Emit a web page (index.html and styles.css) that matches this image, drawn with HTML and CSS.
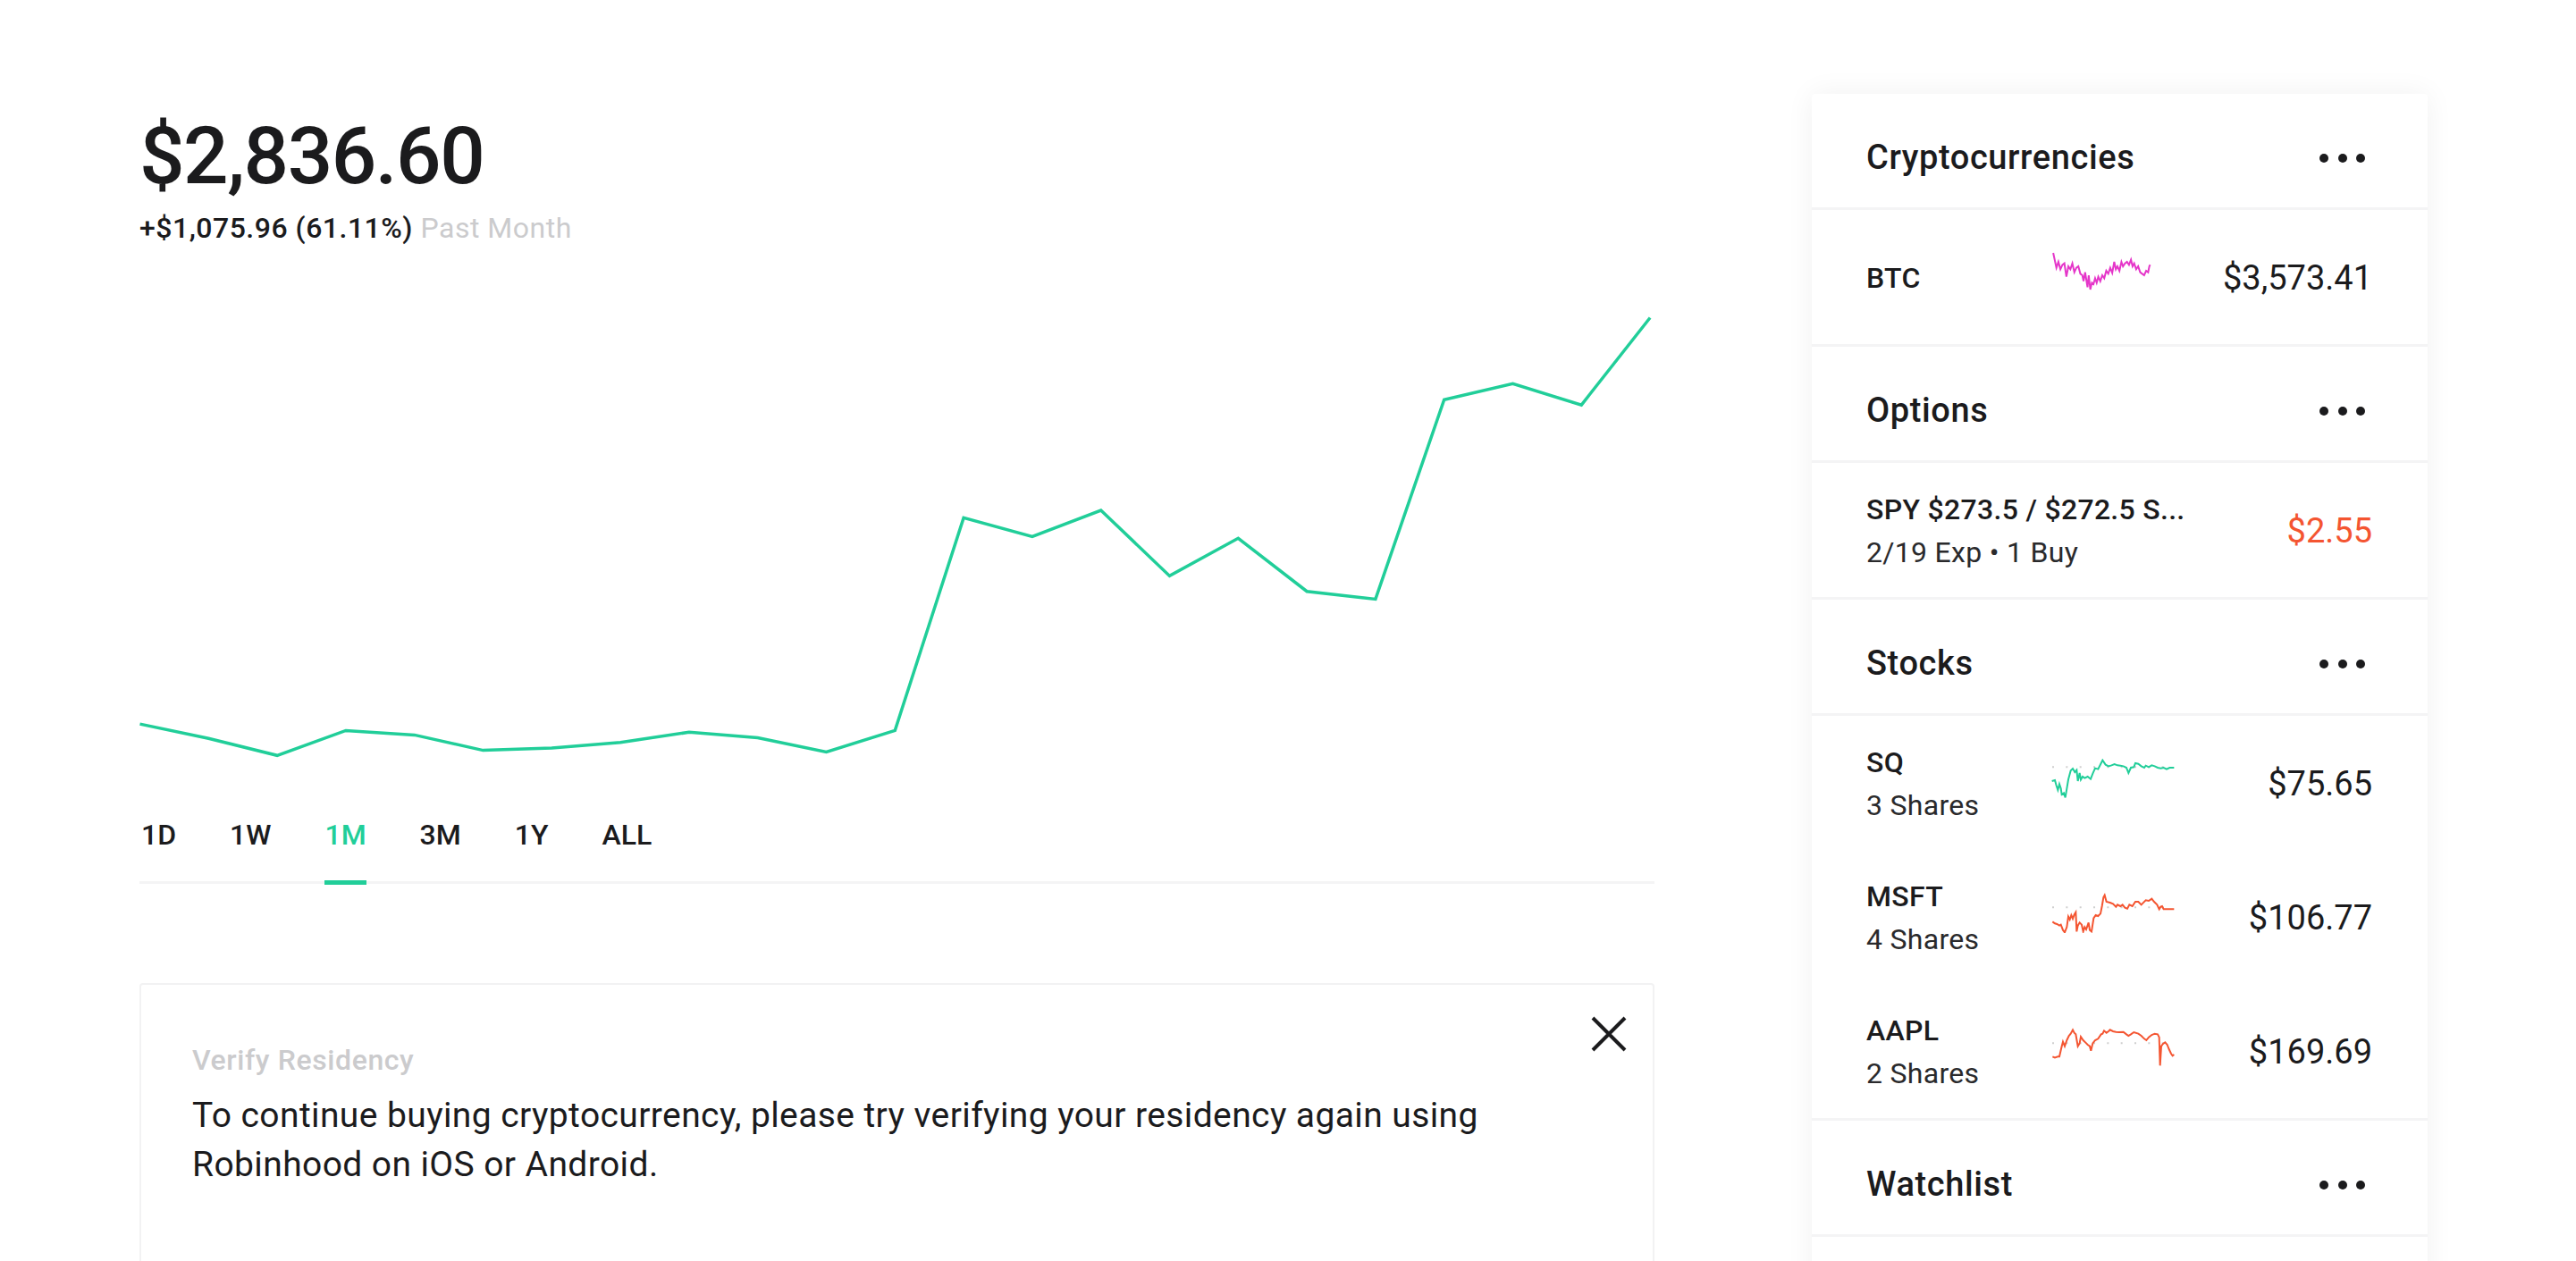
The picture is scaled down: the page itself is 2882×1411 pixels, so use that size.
FILE: index.html
```html
<!DOCTYPE html>
<html lang="en">
<head>
<meta charset="utf-8">
<title>Portfolio</title>
<link rel="stylesheet" href="styles.css">
</head>
<body>
<div class="page">
  <main class="portfolio">
    <h1 class="balance">$2,836.60</h1>
    <p class="change">+$1,075.96 (61.11%) <span class="muted">Past Month</span></p>
    <svg class="chart" width="1695" height="600" viewBox="0 0 1695 600">
      <polyline fill="none" stroke="#21ce99" stroke-width="3.5" points="0.5,530.1 77.3,546.2 154.1,565.3 230.9,537.4 307.7,542.4 384.5,559.6 461.3,556.9 538.1,550.8 614.9,539.3 691.7,545.5 768.5,561.5 845.3,537.4 922.1,299.4 998.9,320.4 1075.7,291 1152.5,364.4 1229.3,322.3 1306.1,381.7 1382.9,390.4 1459.7,167.3 1536.5,149.4 1613.3,173.1 1690.1,75.5"/>
    </svg>
    <nav class="ranges">
      <span class="range">1D</span>
      <span class="range">1W</span>
      <span class="range active">1M</span>
      <span class="range">3M</span>
      <span class="range">1Y</span>
      <span class="range">ALL</span>
    </nav>
    <section class="notice">
      <button class="close" aria-label="Close">
        <svg width="40" height="40" viewBox="0 0 40 40"><path d="M2 2 L38 38 M38 2 L2 38" stroke="#1b1b1d" stroke-width="4" fill="none"/></svg>
      </button>
      <h2 class="notice-title">Verify Residency</h2>
      <p class="notice-body">To continue buying cryptocurrency, please try verifying your residency again using Robinhood on iOS or Android.</p>
    </section>
  </main>

  <aside class="sidebar">
    <div class="group-head">
      <h3>Cryptocurrencies</h3>
      <span class="more"><i></i><i></i><i></i></span>
    </div>
    <div class="group">
      <div class="row">
        <div class="name"><div class="sym">BTC</div></div>
        <svg class="spark spark-btc" width="116" height="50" viewBox="610 530 260 150" preserveAspectRatio="none">
          <polyline fill="none" stroke="#e536c9" stroke-width="2" vector-effect="non-scaling-stroke" points="617,545 625,595 630,575 635,600 640,585 645,580 650,625 655,590 660,600 665,580 670,610 675,595 680,590 685,615 690,620 693,640 697,610 700,635 703,660 706,620 710,668 714,645 718,650 722,630 726,645 730,625 735,640 740,620 745,630 750,605 755,615 760,595 765,612 770,575 774,600 778,590 783,605 788,575 792,590 797,580 802,575 807,585 812,568 816,590 820,580 825,600 830,590 835,610 840,615 845,620 850,605 855,610 858,590 860,585"/>
        </svg>
        <div class="price">$3,573.41</div>
      </div>
    </div>

    <div class="group-head">
      <h3>Options</h3>
      <span class="more"><i></i><i></i><i></i></span>
    </div>
    <div class="group">
      <div class="row">
        <div class="name wide">
          <div class="sym">SPY $273.5 / $272.5 S...</div>
          <div class="sub">2/19 Exp &bull; 1 Buy</div>
        </div>
        <div class="price down">$2.55</div>
      </div>
    </div>

    <div class="group-head">
      <h3>Stocks</h3>
      <span class="more"><i></i><i></i><i></i></span>
    </div>
    <div class="group">
      <div class="row">
        <div class="name"><div class="sym">SQ</div><div class="sub">3 Shares</div></div>
        <svg class="spark" width="140" height="45" viewBox="130 80 420 135">
          <line x1="136" y1="108" x2="552" y2="108" stroke="#cfcfcf" stroke-width="6" stroke-dasharray="6 40"/>
          <polyline fill="none" stroke="#21ce99" stroke-width="6" points="135,155 145,152 150,170 155,185 160,165 165,180 168,200 175,195 180,210 185,180 190,150 198,120 205,113 212,125 218,118 222,155 228,128 232,150 238,140 245,145 255,140 265,148 272,130 280,112 290,115 300,95 305,85 315,100 325,105 335,102 345,98 355,102 365,103 375,105 385,110 392,128 400,110 410,108 415,95 425,97 435,105 445,110 450,103 460,108 470,102 480,105 490,110 500,112 510,110 520,115 530,110 545,110"/>
        </svg>
        <div class="price">$75.65</div>
      </div>
      <div class="row">
        <div class="name"><div class="sym">MSFT</div><div class="sub">4 Shares</div></div>
        <svg class="spark" width="140" height="45" viewBox="130 525 420 135">
          <line x1="136" y1="574" x2="552" y2="574" stroke="#cfcfcf" stroke-width="6" stroke-dasharray="6 40"/>
          <polyline fill="none" stroke="#f45531" stroke-width="6" points="137,622 145,628 152,630 160,635 165,632 172,650 178,658 185,640 190,605 195,615 200,600 205,612 210,598 215,590 218,655 222,635 228,625 235,632 240,655 245,640 250,648 258,625 262,650 268,655 275,610 282,600 290,603 298,595 303,570 308,540 312,533 318,555 330,558 340,562 350,572 355,565 365,570 372,565 380,575 388,578 395,565 405,570 415,555 425,555 435,565 440,560 450,550 460,552 470,545 478,555 488,565 495,580 500,572 505,570 510,580 520,580 530,580 545,580"/>
        </svg>
        <div class="price">$106.77</div>
      </div>
      <div class="row">
        <div class="name"><div class="sym">AAPL</div><div class="sub">2 Shares</div></div>
        <svg class="spark" width="140" height="45" viewBox="130 975 420 135">
          <line x1="136" y1="1030" x2="552" y2="1030" stroke="#cfcfcf" stroke-width="6" stroke-dasharray="6 40"/>
          <polyline fill="none" stroke="#f45531" stroke-width="6" points="137,1075 145,1078 155,1075 160,1075 168,1040 172,1025 178,1040 185,1020 192,1005 198,998 205,985 210,995 215,1000 222,1040 228,1030 232,1008 240,1020 248,1028 255,1035 262,1040 266,1055 272,1030 280,1020 290,1015 300,1000 305,998 310,988 318,995 325,990 330,985 340,990 350,992 360,993 375,992 385,1000 392,1005 400,1000 410,993 425,998 435,1005 445,1015 452,1020 460,1010 470,1002 480,998 490,1000 495,1010 498,1105 502,1040 508,1032 515,1027 522,1035 528,1050 535,1065 540,1072 545,1068"/>
        </svg>
        <div class="price">$169.69</div>
      </div>
    </div>

    <div class="group-head">
      <h3>Watchlist</h3>
      <span class="more"><i></i><i></i><i></i></span>
    </div>
    <div class="group group-empty"></div>
  </aside>
</div>
</body>
</html>
```

FILE: styles.css
```css
* {
  box-sizing: border-box;
}

html, body {
  margin: 0;
  padding: 0;
  background: #ffffff;
}

body {
  font-family: Roboto, "Liberation Sans", Arial, sans-serif;
  color: #1b1b1d;
  overflow: hidden;
}

.page {
  display: flex;
  align-items: flex-start;
  gap: 176px;
  padding: 105px 0 0 156px;
}

/* ---------- left column ---------- */

.portfolio {
  width: 1695px;
  flex: none;
  margin-top: 25px;
}

.balance {
  margin: 0;
  font-size: 89px;
  line-height: 90px;
  font-weight: 500;
  letter-spacing: -1.5px;
}

.change {
  margin: 11px 0 0;
  font-size: 32px;
  line-height: 48px;
  font-weight: 500;
  letter-spacing: 0.5px;
}

.muted {
  color: #cbcbcd;
  font-weight: 400;
}

.chart {
  display: block;
  margin-top: 1px;
}

.ranges {
  display: flex;
  align-items: flex-start;
  gap: 60px;
  margin-top: 30px;
  padding-left: 2px;
  border-bottom: 3px solid #f4f4f5;
}

.range {
  font-size: 32px;
  line-height: 48px;
  font-weight: 500;
  padding-bottom: 27px;
  border-bottom: 5px solid transparent;
  margin-bottom: -4px;
}

.range.active {
  color: #21ce99;
  border-bottom-color: #21ce99;
}

.notice {
  position: relative;
  margin-top: 111px;
  border: 2px solid #f2f2f3;
  border-radius: 4px;
  padding: 61px 57px 200px;
}

.close {
  position: absolute;
  top: 35px;
  right: 29px;
  width: 40px;
  height: 40px;
  padding: 0;
  border: 0;
  background: none;
  display: flex;
}

.notice-title {
  margin: 0;
  font-size: 32px;
  line-height: 46px;
  font-weight: 500;
  letter-spacing: 0.6px;
  color: #cbcbcd;
}

.notice-body {
  margin: 12px 0 0;
  max-width: 1530px;
  font-size: 39px;
  line-height: 55px;
  font-weight: 400;
  letter-spacing: 0.4px;
}

/* ---------- right column ---------- */

.sidebar {
  width: 689px;
  flex: none;
  background: #ffffff;
  border-radius: 4px;
  box-shadow: 0 0 32px rgba(0, 0, 0, 0.06);
}

.group-head {
  height: 130px;
  padding: 16px 70px 0 61px;
  display: flex;
  align-items: center;
  justify-content: space-between;
  border-bottom: 3px solid #f4f4f5;
}

.group-head h3 {
  margin: 0;
  font-size: 38px;
  line-height: 57px;
  font-weight: 500;
  letter-spacing: 0.6px;
}

.more {
  display: flex;
  gap: 10.5px;
}

.more i {
  width: 10px;
  height: 10px;
  border-radius: 50%;
  background: #1b1b1d;
}

.group {
  border-bottom: 3px solid #f4f4f5;
}

.group-empty {
  height: 160px;
  border-bottom: 0;
}

.row {
  height: 150px;
  display: flex;
  align-items: center;
  padding: 2px 62px 0 61px;
}

.name {
  width: 206px;
  flex: none;
  font-size: 32px;
  line-height: 48px;
  letter-spacing: 0.3px;
}

.name.wide {
  width: auto;
  flex: 1;
}

.sym {
  font-weight: 500;
  white-space: nowrap;
}

.sub {
  font-weight: 400;
  color: #2a2a2c;
}

.spark {
  flex: none;
  display: block;
  margin-bottom: 11px;
}

.spark-btc {
  margin-bottom: 16px;
}

.price {
  margin-left: auto;
  font-size: 38px;
  line-height: 57px;
  font-weight: 400;
}

.price.down {
  color: #f45531;
}
```
